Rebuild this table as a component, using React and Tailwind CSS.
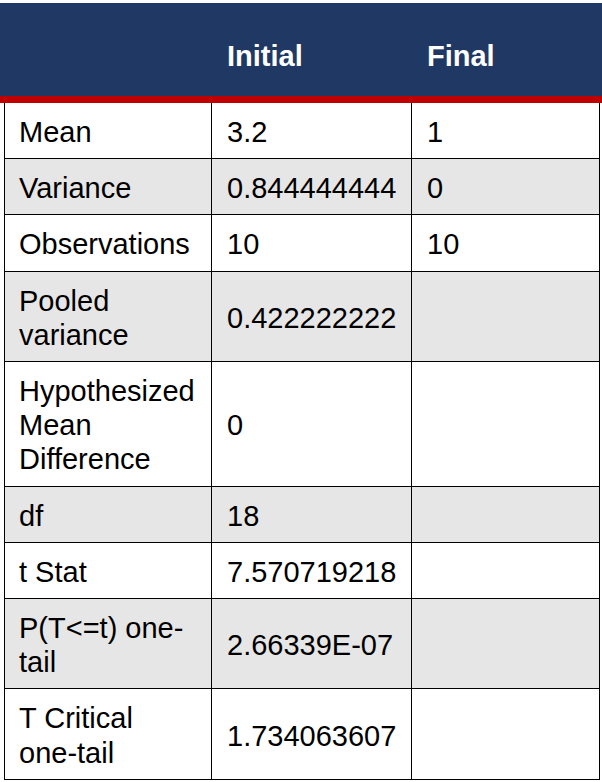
const rows = [
  { label: ['Mean'], initial: '3.2', final: '1' },
  { label: ['Variance'], initial: '0.844444444', final: '0', shaded: true },
  { label: ['Observations'], initial: '10', final: '10' },
  { label: ['Pooled', 'variance'], initial: '0.422222222', final: '', shaded: true },
  { label: ['Hypothesized', 'Mean', 'Difference'], initial: '0', final: '' },
  { label: ['df'], initial: '18', final: '', shaded: true },
  { label: ['t Stat'], initial: '7.570719218', final: '' },
  { label: ['P(T<=t) one-', 'tail'], initial: '2.66339E-07', final: '', shaded: true },
  { label: ['T Critical', 'one-tail'], initial: '1.734063607', final: '' },
];

const Row = ({ row }) => {
  const bg = row.shaded ? 'bg-[#e7e6e6]' : 'bg-white';
  return (
    <div className={`grid grid-cols-[207px_200px_1fr] border-b border-black ${bg}`}>
      <div className="border-r border-black pl-[14px] pt-[12px] pb-[9px] flex flex-col justify-center">
        {row.label.map((line) => (
          <span key={line} className="block whitespace-nowrap">{line}</span>
        ))}
      </div>
      <div className="border-r border-black pl-[15px] pt-[3px] flex items-center">{row.initial}</div>
      <div className="pl-[15px] pt-[3px] flex items-center">{row.final}</div>
    </div>
  );
};

export default function App() {
  return (
    <div className="w-[602px] h-[782px] bg-white pt-[3px] text-black text-[29px] leading-[34.2px] font-['Liberation_Sans',Arial,sans-serif]">
      {/* header */}
      <div className="h-[100px] bg-[#203864] border-b-[7px] border-[#c00000] grid grid-cols-[212px_200px_1fr] text-white font-bold">
        <div />
        <div className="pl-[15px] pt-[36px]">Initial</div>
        <div className="pl-[15px] pt-[36px]">Final</div>
      </div>

      {/* body */}
      <div className="ml-[4px] w-[596px] border-l border-r border-black">
        {rows.map((row, i) => (
          <Row key={i} row={row} />
        ))}
      </div>
    </div>
  );
}
